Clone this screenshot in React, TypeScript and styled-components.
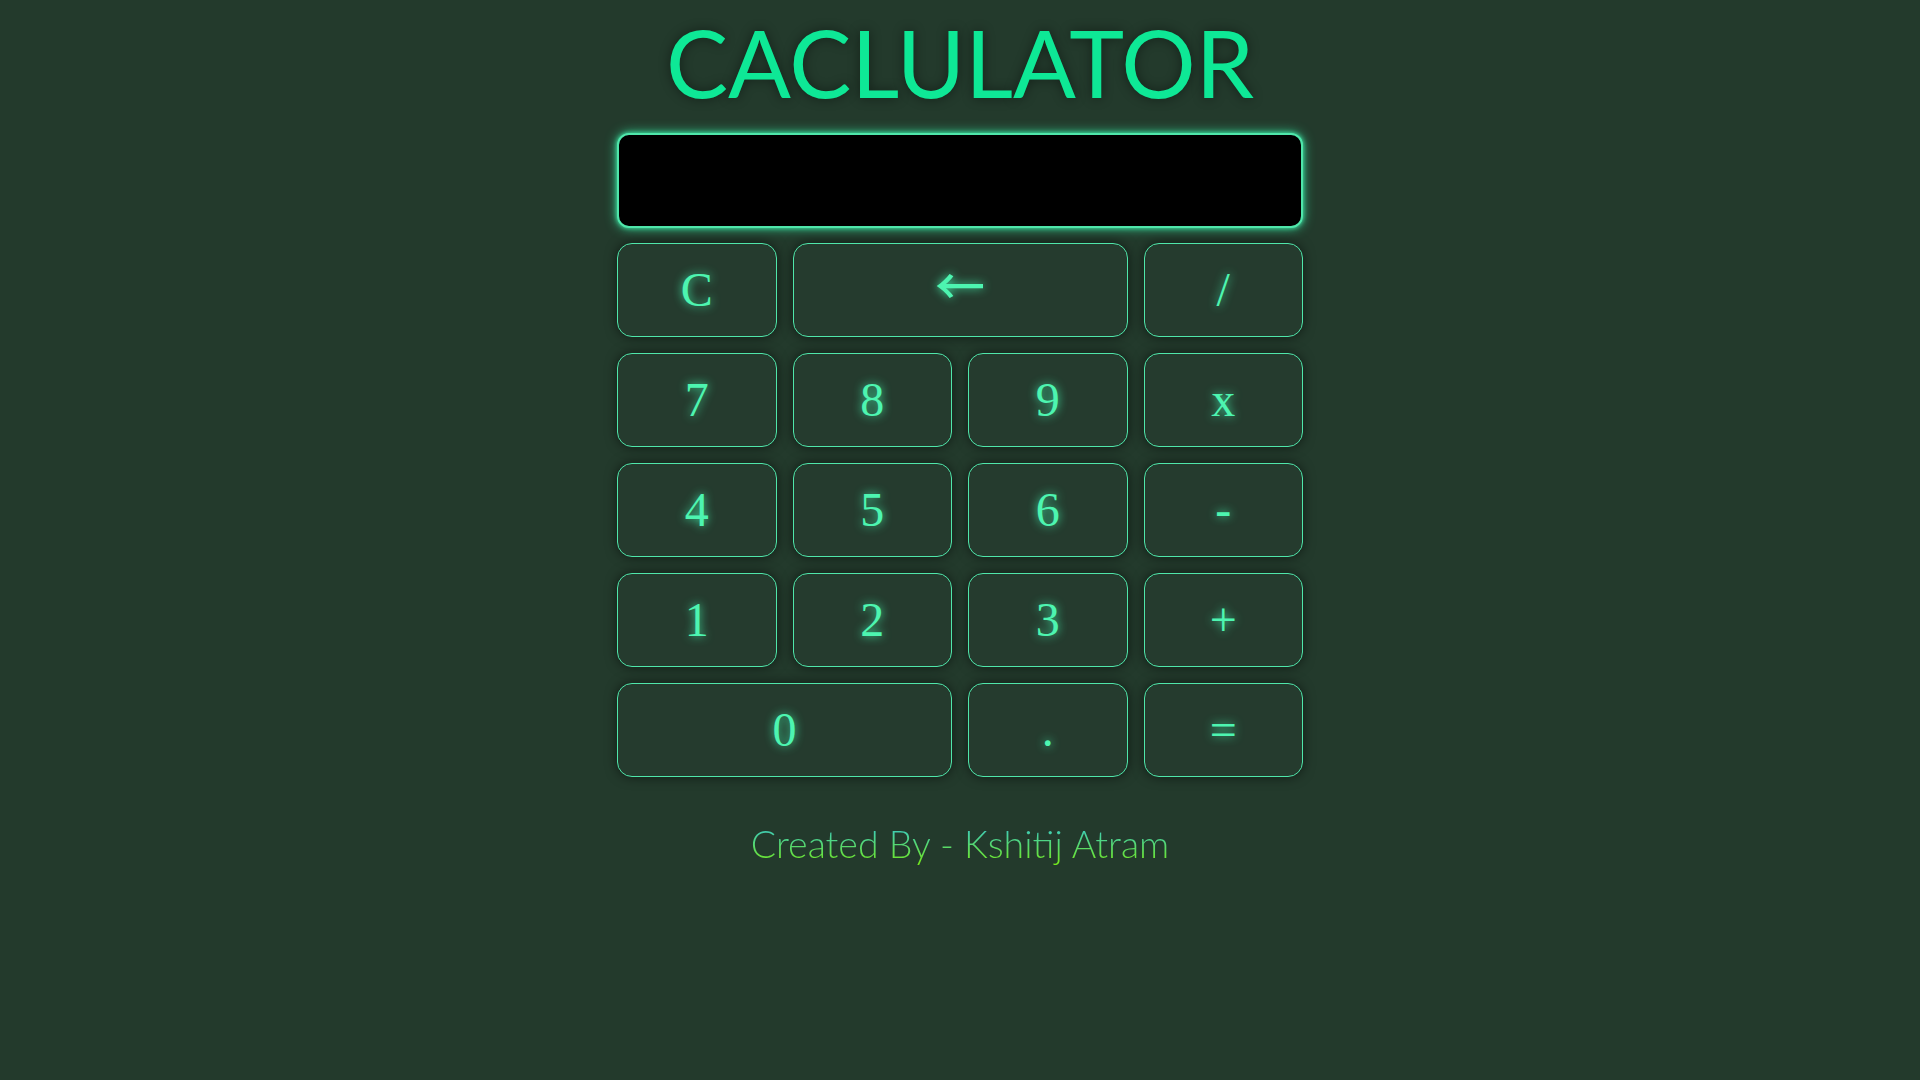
import React from "react";
import styled, { createGlobalStyle } from "styled-components";

const Global = createGlobalStyle`
  html, body {
    margin: 0;
    padding: 0;
    background: #233a2c;
  }
  body {
    font-family: "Lato", "Liberation Sans", sans-serif;
  }
`;

const Page = styled.main`
  display: flex;
  flex-direction: column;
  align-items: center;
  min-height: 1080px;
  background: #233a2c;
`;

const Title = styled.h1`
  margin: 6px 0 0;
  font-family: "Lato", "Liberation Sans", sans-serif;
  font-weight: 400;
  font-size: 93px;
  line-height: 113px;
  letter-spacing: 0;
  color: #0ee896;
  text-shadow: 0 0 12px rgba(0, 0, 0, 0.45);
`;

const Calculator = styled.section`
  width: 686px;
  margin-top: 14px;
  display: flex;
  flex-direction: column;
  gap: 15px;
`;

const Display = styled.div`
  box-sizing: border-box;
  height: 95px;
  background: #000;
  border: 2px solid #4fe6aa;
  border-radius: 12px;
  box-shadow: 0 0 12px #2fd394, 0 0 4px #4fe6aa;
`;

const Keys = styled.div`
  display: grid;
  grid-template-columns: repeat(4, 1fr);
  grid-auto-rows: 94px;
  gap: 16px;
`;

const Key = styled.button<{ $span?: number }>`
  grid-column: span ${(p) => p.$span ?? 1};
  box-sizing: border-box;
  display: flex;
  align-items: center;
  justify-content: center;
  padding: 0;
  background: #253b2e;
  border: 1.5px solid #4fe6aa;
  border-radius: 15px;
  box-shadow: 0 0 12px rgba(0, 0, 0, 0.55);
  color: #4df5b0;
  font-family: "Liberation Serif", "Times New Roman", serif;
  font-size: 48px;
  line-height: 1;
  text-shadow: 0 0 10px #3fe3a3;
  cursor: pointer;
`;

const Arrow = styled.span`
  font-family: "Noto Sans CJK SC", "DejaVu Sans", sans-serif;
  font-weight: 500;
  font-size: 50px;
  line-height: 1;
  margin-top: -14px;
`;

const Footer = styled.p`
  margin: 45px 0 0;
  font-family: "Lato", "Liberation Sans", sans-serif;
  font-weight: 300;
  font-size: 37.5px;
  line-height: 44px;
  background: linear-gradient(to bottom, #3ac9c4 10%, #72e81e 95%);
  -webkit-background-clip: text;
  background-clip: text;
  color: transparent;
`;

const keys: { label: string; span?: number }[] = [
  { label: "C" },
  { label: "←", span: 2 },
  { label: "/" },
  { label: "7" },
  { label: "8" },
  { label: "9" },
  { label: "x" },
  { label: "4" },
  { label: "5" },
  { label: "6" },
  { label: "-" },
  { label: "1" },
  { label: "2" },
  { label: "3" },
  { label: "+" },
  { label: "0", span: 2 },
  { label: "." },
  { label: "=" },
];

export default function App() {
  return (
    <Page>
      <Global />
      <Title>CACLULATOR</Title>
      <Calculator>
        <Display />
        <Keys>
          {keys.map((k) => (
            <Key key={k.label} $span={k.span}>
              {k.label === "←" ? <Arrow>←</Arrow> : k.label}
            </Key>
          ))}
        </Keys>
      </Calculator>
      <Footer>Created By - Kshitij Atram</Footer>
    </Page>
  );
}
